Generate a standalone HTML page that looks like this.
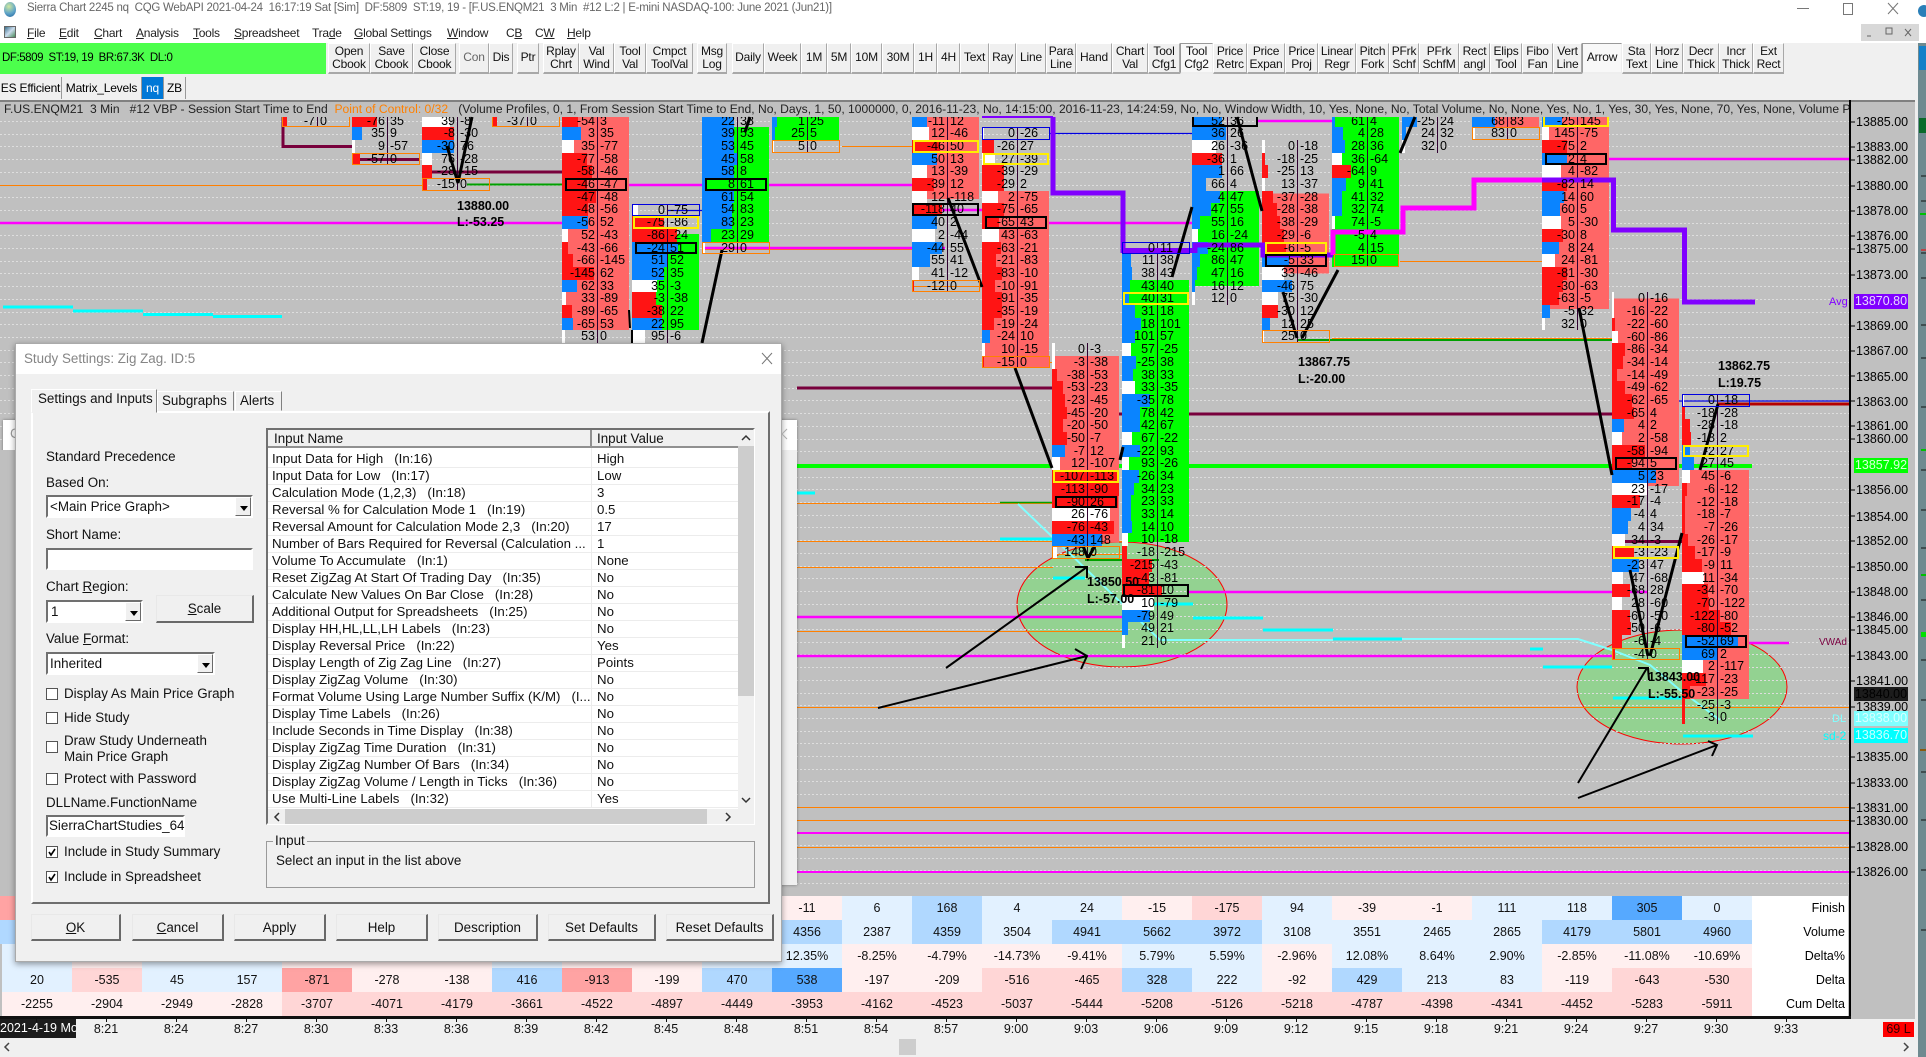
<!DOCTYPE html>
<html><head><meta charset="utf-8"><title>Sierra Chart</title>
<style>
html,body{margin:0;padding:0}
body{width:1926px;height:1057px;overflow:hidden;position:relative;background:#f0f0f0;font-family:"Liberation Sans",sans-serif;color:#000}
svg{position:absolute;left:0;top:0}
.t{position:absolute;white-space:pre;line-height:16px}
.d{font-size:13.4px;color:#111}
.m{position:absolute;top:25px;font-size:12px;line-height:16px;color:#222;letter-spacing:-.25px}
.tb{position:absolute;top:43px;height:31px;font-size:12px;line-height:13.5px;text-align:center;display:flex;align-items:center;justify-content:center;background:#f0f0f0;box-sizing:border-box;border-right:1px solid #a8a8a8;border-bottom:2px solid #a8a8a8;border-top:1px solid #fff;border-left:1px solid #fff;color:#111;letter-spacing:-.2px}
.pr{background:#f8f8f8;border-color:#999 #eee #eee #999}
.tg{position:absolute;top:77px;height:22px;font-size:12px;line-height:22px;text-align:center;background:#f0f0f0;border-right:1px solid #999;box-sizing:border-box;letter-spacing:-.2px}
#w{position:absolute;left:0;top:117px;width:1850px;height:779px;overflow:hidden}
.c{position:absolute;width:70px;font-size:12.5px;line-height:12.7px;color:#000}
.c p{margin:0;height:12.7px;width:67px;position:relative}
.c p::after{content:"";position:absolute;left:35px;top:0;height:12.7px;width:1px;background:#300030}
.c b,.c i,.c a{position:absolute;left:0;top:0;height:12.7px;display:block}
.c b{background:#ff1414}.c i{background:#0a84ff}.c a{background:#fff}
.c s,.c u{position:absolute;top:0;text-decoration:none;white-space:nowrap;z-index:1}
.c s{right:34px}.c u{left:38px}
.c .k{background:#ff6666}.c .g{background:#00ff00}
.c tt{position:absolute;top:0;height:12.7px;box-sizing:border-box;z-index:2}
.x{left:3px;width:62px;border:2px solid #000}
.y{left:1px;width:66px;border:2px solid #ffee00}
.o{left:0;width:68px;border:1px solid #ff8000}
.n{left:0;width:68px;border:1px solid #0000e0}
.zl{position:absolute;font-size:12.5px;font-weight:bold;line-height:14px;white-space:pre}
.pl{position:absolute;left:1856px;font-size:12.5px;line-height:14px;color:#000}
.hl{position:absolute;left:1854px;width:54px;height:15px;font-size:12.5px;line-height:15px;text-align:center}
.row{position:absolute;display:flex;height:24px;font-size:12.5px;line-height:24px;text-align:center;color:#111}
.row span{width:70px;display:block;flex:none}
.lb{background:#e2f1ff}.lr{background:#ffefef}.mr{background:#ffd6d6}.sr{background:#ffa3a3}.mb{background:#b0d8ff}.sb{background:#56a9ff}
.rl{position:absolute;left:1752px;width:93px;height:24px;padding-right:3px;background:#fff;text-align:right;font-size:12.5px;line-height:24px}
.tl{position:absolute;top:1021px;width:70px;text-align:center;font-size:12.5px;line-height:16px;color:#111}
.box{position:absolute;box-sizing:border-box}
.cb{position:absolute;background:#fff;box-sizing:border-box;border:2px solid;border-color:#707070 #fff #fff #707070}
.ab{position:absolute;background:#f0f0f0;box-sizing:border-box;border:1px solid;border-color:#fff #696969 #696969 #fff}
.ab::after{content:"";position:absolute;left:4px;top:8px;border:4px solid transparent;border-top:5px solid #000;border-bottom:0}
.btn{position:absolute;top:914px;height:27px;background:#f0f0f0;box-sizing:border-box;border:1px solid;border-color:#e8e8e8 #696969 #696969 #e8e8e8;border-right-width:2px;border-bottom-width:2px;text-align:center;font-size:13.4px;line-height:25px;color:#111}
#lst{position:absolute;left:268px;top:451px;width:470px;font-size:13.25px;color:#111}
#lst div{height:16px;line-height:16px;border-bottom:1px solid #ececec;position:relative;white-space:pre;padding-left:4px}
#lst span{position:absolute;left:329px;top:0;padding-left:0}
</style></head><body>

<!-- title bar -->
<div style="position:absolute;left:0;top:0;width:1926px;height:24px;background:#fff"></div>
<div style="position:absolute;left:0;top:24px;width:1926px;height:19px;background:#fff"></div>
<div style="position:absolute;left:4px;top:2px;width:12px;height:15px;border-radius:50%;background:radial-gradient(circle at 40% 30%,#cfe8a0,#5fa4c8 55%,#1f5f9a)"></div>
<div class="t" style="left:27px;top:0;font-size:11.5px;letter-spacing:-.25px;color:#666">Sierra Chart 2245 nq  CQG WebAPI 2021-04-24  16:17:19 Sat [Sim]  DF:5809  ST:19, 19 - [F.US.ENQM21  3 Min  #12 L:2 | E-mini NASDAQ-100: June 2021 (Jun21)]</div>
<div style="position:absolute;left:4px;top:26px;width:12px;height:12px;background:linear-gradient(135deg,#3a6f8a,#cde,#4a8a5a);border:1px solid #666;box-sizing:border-box"></div>
<div class="m" style="left:27px"><u>F</u>ile</div><div class="m" style="left:59px"><u>E</u>dit</div><div class="m" style="left:94px"><u>C</u>hart</div><div class="m" style="left:136px"><u>A</u>nalysis</div><div class="m" style="left:193px"><u>T</u>ools</div><div class="m" style="left:234px"><u>S</u>preadsheet</div><div class="m" style="left:312px">Tra<u>d</u>e</div><div class="m" style="left:354px"><u>G</u>lobal Settings</div><div class="m" style="left:447px"><u>W</u>indow</div><div class="m" style="left:506px">C<u>B</u></div><div class="m" style="left:535px">C<u>W</u></div><div class="m" style="left:567px"><u>H</u>elp</div>
<div style="position:absolute;left:1861px;top:24px;width:58px;height:17px;background:#d8d8d8"></div>
<svg width="1926" height="45" style="z-index:1"><path d="M1797 8.500H1809M1888 3L1898 14M1898 3L1888 14" stroke="#777" fill="none"/><rect x="1843.500" y="3.500" width="9" height="11" fill="none" stroke="#777"/><path d="M1867 36H1871M1886 28H1892V34H1886ZM1905 29L1911 36M1911 29L1905 36" stroke="#666" fill="none"/><circle cx="1924" cy="11" r="6" fill="#2a7fb8"/></svg>

<!-- toolbar -->
<div style="position:absolute;left:0;top:43px;width:326px;height:31px;background:#4cff4c;font-size:11.5px;line-height:31px;white-space:pre;padding-left:2px;box-sizing:border-box;letter-spacing:-.44px">DF:5809  ST:19, 19  BR:67.3K  DL:0</div>
<div class="tb" style="left:328px;width:42px">Open<br>Cbook</div><div class="tb" style="left:370px;width:43px">Save<br>Cbook</div><div class="tb" style="left:413px;width:43px">Close<br>Cbook</div>
<div class="tb" style="left:459px;width:30px;color:#666">Con</div><div class="tb" style="left:489px;width:24px">Dis</div><div class="tb" style="left:517px;width:22px">Ptr</div>
<div class="tb" style="left:543px;width:36px">Rplay<br>Chrt</div><div class="tb" style="left:579px;width:35px">Val<br>Wind</div><div class="tb" style="left:614px;width:32px">Tool<br>Val</div><div class="tb" style="left:646px;width:47px">Cmpct<br>ToolVal</div><div class="tb" style="left:697px;width:30px">Msg<br>Log</div>
<div class="tb" style="left:732px;width:32px">Daily</div><div class="tb" style="left:764px;width:37px">Week</div><div class="tb" style="left:801px;width:26px">1M</div><div class="tb" style="left:827px;width:24px">5M</div><div class="tb" style="left:851px;width:31px">10M</div><div class="tb" style="left:882px;width:32px">30M</div><div class="tb" style="left:914px;width:23px">1H</div><div class="tb" style="left:937px;width:23px">4H</div>
<div class="tb" style="left:960px;width:29px">Text</div><div class="tb" style="left:989px;width:27px">Ray</div><div class="tb" style="left:1016px;width:30px">Line</div><div class="tb" style="left:1046px;width:30px">Para<br>Line</div><div class="tb" style="left:1076px;width:36px">Hand</div><div class="tb" style="left:1112px;width:36px">Chart<br>Val</div><div class="tb" style="left:1148px;width:32px">Tool<br>Cfg1</div><div class="tb pr" style="left:1180px;width:33px">Tool<br>Cfg2</div><div class="tb" style="left:1213px;width:34px">Price<br>Retrc</div><div class="tb" style="left:1247px;width:38px">Price<br>Expan</div><div class="tb" style="left:1285px;width:33px">Price<br>Proj</div><div class="tb" style="left:1318px;width:38px">Linear<br>Regr</div><div class="tb" style="left:1356px;width:33px">Pitch<br>Fork</div><div class="tb" style="left:1389px;width:30px">PFrk<br>Schf</div><div class="tb" style="left:1419px;width:40px">PFrk<br>SchfM</div><div class="tb" style="left:1459px;width:31px">Rect<br>angl</div><div class="tb" style="left:1490px;width:32px">Elips<br>Tool</div><div class="tb" style="left:1522px;width:31px">Fibo<br>Fan</div><div class="tb" style="left:1553px;width:29px">Vert<br>Line</div><div class="tb pr" style="left:1582px;width:40px">Arrow</div><div class="tb" style="left:1622px;width:29px">Sta<br>Text</div><div class="tb" style="left:1651px;width:32px">Horz<br>Line</div><div class="tb" style="left:1683px;width:36px">Decr<br>Thick</div><div class="tb" style="left:1719px;width:34px">Incr<br>Thick</div><div class="tb" style="left:1753px;width:31px">Ext<br>Rect</div>

<div class="tg" style="left:0;width:62px">ES Efficient</div><div class="tg" style="left:62px;width:80px">Matrix_Levels</div><div class="tg" style="left:142px;width:22px;background:#0078d7;color:#fff">nq</div><div class="tg" style="left:164px;width:22px">ZB</div>

<!-- chart background -->
<div style="position:absolute;left:0;top:100px;width:1915px;height:919px;background:#c0c0c0"></div>
<div style="position:absolute;left:0;top:100px;width:1915px;height:2px;background:#808080"></div>
<div style="position:absolute;left:0;top:102px;width:1850px;height:15px;overflow:hidden;font-size:12.1px;line-height:15px;white-space:pre;color:#222;padding-left:4px;box-sizing:border-box">F.US.ENQM21  3 Min   #12 VBP - Session Start Time to End  <span style="color:#ff8000">Point of Control: 0/32</span>   (Volume Profiles, 0, 1, From Session Start Time to End, No, Days, 1, 50, 1000000, 0, 2016-11-23, No, 14:15:00, 2016-11-23, 14:24:59, No, No, Window Width, 10, Yes, None, No, Total Volume, No, None, Yes, No, 1, Yes, 30, Yes, None, 70, Yes, None, Volume Profile</div>
<div style="position:absolute;left:1915px;top:100px;width:3px;height:940px;background:#eee"></div>
<div style="position:absolute;left:1918px;top:43px;width:8px;height:1014px;background:#6f8a90"></div>
<svg width="1926" height="1057">
<path d="M1921 60H1926M1921 176H1926M1921 201H1926M1921 253H1926M1921 278H1926M1921 325H1926M1921 358H1926M1921 407H1926M1921 470H1926M1921 510H1926M1921 548H1926M1921 600H1926M1921 660H1926M1921 700H1926M1921 772H1926M1921 820H1926M1921 870H1926M1921 930H1926" stroke="#111"/>
<rect x="1919" y="118" width="7" height="15" fill="#0a6a2a"/><rect x="1919" y="46" width="7" height="24" fill="#1580c8"/><path d="M1920 214H1926M1921 450H1926M1921 575H1926" stroke="#00c000" stroke-width="2"/><rect x="1921" y="632" width="5" height="5" fill="#00e000"/><path d="M1921 250H1926" stroke="#f00"/><path d="M1920 750H1926" stroke="#8a5a10" stroke-width="2"/>
<ellipse cx="1122" cy="604.500" rx="105" ry="62.500" fill="#93d291" stroke="#f00" stroke-width="1"/>
<ellipse cx="1682" cy="687" rx="105" ry="57" fill="#93d291" stroke="#f00" stroke-width="1"/>
<path d="M0 121.500H1850M0 134.500H1850M0 146.500H1850M0 159.500H1850M0 172.500H1850M0 185.500H1850M0 197.500H1850M0 210.500H1850M0 223.500H1850M0 235.500H1850M0 248.500H1850M0 261.500H1850M0 273.500H1850M0 286.500H1850M0 299.500H1850M0 312.500H1850M0 324.500H1850M0 337.500H1850M0 350.500H1850M0 362.500H1850M0 375.500H1850M0 388.500H1850M0 400.500H1850M0 413.500H1850M0 426.500H1850M0 439.500H1850M0 451.500H1850M0 464.500H1850M0 477.500H1850M0 489.500H1850M0 502.500H1850M0 515.500H1850M0 527.500H1850M0 540.500H1850M0 553.500H1850M0 566.500H1850M0 578.500H1850M0 591.500H1850M0 604.500H1850M0 616.500H1850M0 629.500H1850M0 642.500H1850M0 654.500H1850M0 667.500H1850M0 680.500H1850M0 693.500H1850M0 705.500H1850M0 718.500H1850M0 731.500H1850M0 743.500H1850M0 756.500H1850M0 769.500H1850M0 781.500H1850M0 794.500H1850M0 807.500H1850M0 820.500H1850M0 832.500H1850M0 845.500H1850M0 858.500H1850M0 870.500H1850M0 883.500H1850" stroke="#dedede" stroke-dasharray="2 2" fill="none"/>
<path d="M0 185.500H422M842 146.500H912M702 249.500H912M912 286.500H982M1045 362.500H1052M1400 261.500H1542M1332 338.500H1612M797 567.500H1053M797 503.500H1052M797 541.500H1122M1052 554.500H1122M797 631.500H1122M797 707.500H1850M785 807.500H1850M785 820.500H1850M785 847.500H1850" stroke="#ff8000" fill="none"/>
<path d="M0 223H562M629 185H912M912 210H982M1049 223H1192M1258 121H1332M702 248H945M1609 159H1850M1187 592H1648M797 656H1612M797 617H1122M1748 643H1789M1697 465H1720" stroke="#ff00ff" stroke-width="2.500" fill="none"/>
<path d="M785 833H1850M785 872H1850" stroke="#ff00ff" stroke-width="2" fill="none"/>
<path d="M467 184.500H562M1297 340H1612M1085 560H1159" stroke="#00a000" stroke-width="2" fill="none"/>
<path d="M1000 502.500H1052" stroke="#00a000" stroke-width="1.500" fill="none"/>
<path d="M0 466H1752" stroke="#00ff00" stroke-width="4" fill="none"/>
<path d="M283 117V146.500H352M360 159.500H420M432 172H562M797 388H1052M1052 414H1612M1625 541.500H1682" stroke="#78003c" stroke-width="3" fill="none"/>
<path d="M1718 404H1850" stroke="#b40000" stroke-width="3"/>
<path d="M1050 133.500H1192M667 210.500H702M1647 401H1850" stroke="#0000e0" stroke-width="1.200" fill="none"/>
<path d="M3 307H73M73 311H143M143 314.500H213M213 316.500H282M785 493H815M1000 539H1052M1053 578H1085M1122 604H1193M1193 618H1263M1263 630H1333M1333 639H1402M1530 649H1543M1543 667H1612M1613 698H1682M1683 736H1753" stroke="#00ffff" stroke-width="3" fill="none"/>
<path d="M1018 504L1160 640H1333M1402 639H1578L1612 650L1650 665L1680 690L1720 720" stroke="#80ffff" stroke-width="2" fill="none"/>
</svg>

<!-- footprints -->
<div id="w">
<div class="c" style="left:282px;top:-2.35px"><p><b style="width:5px"></b><s>-7</s><u>0</u><tt class="o"></tt></p></div>
<div class="c" style="left:352px;top:-2.35px"><p><b style="width:25px"></b><s>-76</s><u>35</u></p><p><i style="width:10px"></i><s>35</s><u>9</u></p><p><a style="width:3px"></a><s>9</s><u>-57</u></p><p><b style="width:8px"></b><s>-57</s><u>0</u><tt class="o"></tt></p></div>
<div class="c" style="left:422px;top:-2.35px"><p><a style="width:28px"></a><s>39</s><u>-8</u></p><p><b style="width:32px"></b><s>-8</s><u>-30</u></p><p><i style="width:32px"></i><s>-30</s><u>76</u></p><p><a style="width:10px"></a><s>76</s><u>-28</u></p><p><b style="width:10px"></b><s>-28</s><u>-15</u></p><p><b style="width:5px"></b><s>-15</s><u>0</u><tt class="o"></tt></p></div>
<div class="c" style="left:492px;top:-2.35px"><p><b style="width:5px"></b><s>-37</s><u>0</u><tt class="o"></tt></p></div>
<div class="c" style="left:562px;top:-2.35px"><p class="k"><b style="width:16px"></b><s>-54</s><u>3</u></p><p class="k"><i style="width:19px"></i><s>3</s><u>35</u></p><p class="k"><a style="width:12px"></a><s>35</s><u>-77</u></p><p class="k"><b style="width:25px"></b><s>-77</s><u>-58</u></p><p class="k"><b style="width:30px"></b><s>-58</s><u>-46</u></p><p class="k"><b style="width:25px"></b><s>-46</s><u>-47</u><tt class="x"></tt></p><p class="k"><b style="width:34px"></b><s>-47</s><u>-48</u></p><p class="k"><b style="width:26px"></b><s>-48</s><u>-56</u></p><p class="k"><i style="width:26px"></i><s>-56</s><u>52</u></p><p class="k"><a style="width:6px"></a><s>52</s><u>-43</u></p><p class="k"><b style="width:6px"></b><s>-43</s><u>-66</u></p><p class="k"><b style="width:11px"></b><s>-66</s><u>-145</u></p><p class="k"><b style="width:32px"></b><s>-145</s><u>62</u></p><p class="k"><i style="width:15px"></i><s>62</s><u>33</u></p><p class="k"><a style="width:4px"></a><s>33</s><u>-89</u></p><p class="k"><b style="width:10px"></b><s>-89</s><u>-65</u></p><p class="k"><i style="width:11px"></i><s>-65</s><u>53</u></p><p><a style="width:3px"></a><s>53</s><u>0</u></p></div>
<div class="c" style="left:632px;top:86.55px"><p><a style="width:6px"></a><s>0</s><u>-75</u><tt class="n"></tt></p><p><b style="width:32px"></b><s>-75</s><u>-86</u><tt class="y"></tt></p><p style="background:linear-gradient(transparent 40%,#0f0 40%)"><b style="width:45px"></b><s>-86</s><u>-24</u></p><p class="g"><i style="width:46px"></i><s>-24</s><u>51</u><tt class="x"></tt></p><p class="g"><i style="width:35px"></i><s>51</s><u>52</u></p><p class="g"><i style="width:32px"></i><s>52</s><u>35</u></p><p class="g"><a style="width:25px"></a><s>35</s><u>-3</u></p><p class="g"><b style="width:24px"></b><s>-3</s><u>-38</u></p><p class="g"><b style="width:30px"></b><s>-38</s><u>22</u></p><p class="g"><i style="width:30px"></i><s>22</s><u>95</u></p><p><a style="width:13px"></a><s>95</s><u>-6</u></p></div>
<div class="c" style="left:702px;top:-2.35px"><p><i style="width:32px"></i><s>22</s><u>38</u></p><p class="g"><i style="width:32px"></i><s>39</s><u>53</u></p><p class="g"><i style="width:32px"></i><s>53</s><u>45</u></p><p class="g"><i style="width:35px"></i><s>45</s><u>58</u></p><p class="g"><i style="width:32px"></i><s>58</s><u>8</u></p><p class="g"><i style="width:5px"></i><s>8</s><u>61</u><tt class="x"></tt></p><p class="g"><i style="width:32px"></i><s>61</s><u>54</u></p><p class="g"><i style="width:30px"></i><s>54</s><u>83</u></p><p class="g"><i style="width:30px"></i><s>83</s><u>23</u></p><p class="g"><i style="width:9px"></i><s>23</s><u>29</u></p><p><a style="width:3px"></a><s>29</s><u>0</u><tt class="o"></tt></p></div>
<div class="c" style="left:772px;top:-2.35px"><p class="g"><i style="width:5px"></i><s>1</s><u>25</u></p><p class="g"><i style="width:3px"></i><s>25</s><u>5</u></p><p><a style="width:2px"></a><s>5</s><u>0</u><tt class="o"></tt></p></div>
<div class="c" style="left:912px;top:-2.35px"><p class="k"><i style="width:15px"></i><s>-11</s><u>12</u></p><p class="k"><a style="width:17px"></a><s>12</s><u>-46</u></p><p class="k"><b style="width:28px"></b><s>-46</s><u>50</u><tt class="y"></tt></p><p class="k"><i style="width:25px"></i><s>50</s><u>13</u></p><p class="k"><a style="width:15px"></a><s>13</s><u>-39</u></p><p class="k"><b style="width:22px"></b><s>-39</s><u>12</u></p><p style="background:linear-gradient(#f66 65%,transparent 65%)"><a style="width:15px"></a><s>12</s><u>-118</u></p><p><b style="width:30px"></b><s>-118</s><u>40</u><tt class="x" style="left:0;width:67px"></tt></p><p><i style="width:25px"></i><s>40</s><u>2</u></p><p><a style="width:23px"></a><s>2</s><u>-44</u></p><p><i style="width:30px"></i><s>-44</s><u>55</u></p><p><i style="width:18px"></i><s>55</s><u>41</u></p><p><a style="width:7px"></a><s>41</s><u>-12</u></p><p><b style="width:2px"></b><s>-12</s><u>0</u><tt class="o"></tt></p></div>
<div class="c" style="left:982px;top:10.35px"><p><a style="width:2px"></a><s>0</s><u>-26</u><tt class="n"></tt></p><p><b style="width:12px"></b><s>-26</s><u>27</u></p><p><a style="width:13px"></a><s>27</s><u>-39</u><tt class="y"></tt></p><p><b style="width:22px"></b><s>-39</s><u>-29</u></p><p><b style="width:22px"></b><s>-29</s><u>2</u></p><p class="k"><a style="width:16px"></a><s>2</s><u>-75</u></p><p class="k"><b style="width:22px"></b><s>-75</s><u>-65</u></p><p class="k"><b style="width:17px"></b><s>-65</s><u>43</u><tt class="x"></tt></p><p class="k"><a style="width:17px"></a><s>43</s><u>-63</u></p><p class="k"><b style="width:19px"></b><s>-63</s><u>-21</u></p><p class="k"><b style="width:14px"></b><s>-21</s><u>-83</u></p><p class="k"><b style="width:20px"></b><s>-83</s><u>-10</u></p><p class="k"><b style="width:13px"></b><s>-10</s><u>-91</u></p><p class="k"><b style="width:20px"></b><s>-91</s><u>-35</u></p><p class="k"><b style="width:20px"></b><s>-35</s><u>-19</u></p><p class="k"><b style="width:12px"></b><s>-19</s><u>-24</u></p><p class="k"><i style="width:8px"></i><s>-24</s><u>10</u></p><p class="k"><a style="width:3px"></a><s>10</s><u>-15</u></p><p class="k"><b style="width:2px"></b><s>-15</s><u>0</u><tt class="o"></tt></p></div>
<div class="c" style="left:1052px;top:226.25px"><p><a style="width:3px"></a><s>0</s><u>-3</u></p><p class="k"><a style="width:3px"></a><s>-3</s><u>-38</u></p><p class="k"><b style="width:5px"></b><s>-38</s><u>-53</u></p><p class="k"><b style="width:11px"></b><s>-53</s><u>-23</u></p><p class="k"><b style="width:13px"></b><s>-23</s><u>-45</u></p><p class="k"><b style="width:15px"></b><s>-45</s><u>-20</u></p><p class="k"><b style="width:11px"></b><s>-20</s><u>-50</u></p><p class="k"><b style="width:15px"></b><s>-50</s><u>-7</u></p><p class="k"><i style="width:13px"></i><s>-7</s><u>12</u></p><p class="k"><a style="width:8px"></a><s>12</s><u>-107</u></p><p class="k"><b style="width:67px"></b><s>-107</s><u>-113</u><tt class="y"></tt></p><p class="k"><b style="width:67px"></b><s>-113</s><u>-90</u></p><p class="k"><b style="width:66px"></b><s>-90</s><u>26</u><tt class="x"></tt></p><p class="k"><a style="width:58px"></a><s>26</s><u>-76</u></p><p class="k"><b style="width:62px"></b><s>-76</s><u>-43</u></p><p style="background:linear-gradient(#f66 70%,transparent 70%)"><i style="width:50px"></i><s>-43</s><u>148</u></p><p><a style="width:5px"></a><s>148</s><u>0</u><tt class="o"></tt></p></div>
<div class="c" style="left:1122px;top:124.65px"><p><s>0</s><u>11</u><tt class="n"></tt></p><p><i style="width:9px"></i><s>11</s><u>38</u></p><p><i style="width:10px"></i><s>38</s><u>43</u></p><p class="g"><i style="width:8px"></i><s>43</s><u>40</u></p><p class="g"><i style="width:7px"></i><s>40</s><u>31</u><tt class="y"></tt></p><p class="g"><i style="width:13px"></i><s>31</s><u>18</u></p><p class="g"><i style="width:19px"></i><s>18</s><u>101</u></p><p class="g"><i style="width:13px"></i><s>101</s><u>57</u></p><p class="g"><a style="width:9px"></a><s>57</s><u>-25</u></p><p class="g"><i style="width:14px"></i><s>-25</s><u>38</u></p><p class="g"><i style="width:11px"></i><s>38</s><u>33</u></p><p class="g"><a style="width:13px"></a><s>33</s><u>-35</u></p><p class="g"><i style="width:28px"></i><s>-35</s><u>78</u></p><p class="g"><i style="width:18px"></i><s>78</s><u>42</u></p><p class="g"><i style="width:18px"></i><s>42</s><u>67</u></p><p class="g"><a style="width:10px"></a><s>67</s><u>-22</u></p><p class="g"><i style="width:18px"></i><s>-22</s><u>93</u></p><p class="g"><a style="width:7px"></a><s>93</s><u>-26</u></p><p class="g"><i style="width:17px"></i><s>-26</s><u>34</u></p><p class="g"><i style="width:12px"></i><s>34</s><u>23</u></p><p class="g"><i style="width:9px"></i><s>23</s><u>33</u></p><p class="g"><i style="width:9px"></i><s>33</s><u>14</u></p><p class="g"><i style="width:10px"></i><s>14</s><u>10</u></p><p style="background:linear-gradient(#0f0 70%,transparent 70%)"><a style="width:6px"></a><s>10</s><u>-18</u></p><p><b style="width:5px"></b><s>-18</s><u>-215</u></p><p><b style="width:30px"></b><s>-215</s><u>-43</u></p><p><b style="width:27px"></b><s>-43</s><u>-81</u></p><p><b style="width:40px"></b><s>-81</s><u>10</u><tt class="x" style="left:1px;width:66px"></tt></p><p><a style="width:32px"></a><s>10</s><u>-79</u></p><p><i style="width:28px"></i><s>-79</s><u>49</u></p><p><i style="width:6px"></i><s>49</s><u>21</u></p><p><a style="width:3px"></a><s>21</s><u>0</u></p></div>
<div class="c" style="left:1192px;top:-2.35px"><p><i style="width:30px"></i><s>52</s><u>36</u><tt class="x" style="left:0;width:66px"></tt></p><p><i style="width:34px"></i><s>36</s><u>26</u></p><p><a style="width:24px"></a><s>26</s><u>-36</u></p><p><b style="width:30px"></b><s>-36</s><u>1</u></p><p><i style="width:30px"></i><s>1</s><u>66</u></p><p><i style="width:14px"></i><s>66</s><u>4</u></p><p class="g"><i style="width:28px"></i><s>4</s><u>47</u></p><p class="g"><i style="width:19px"></i><s>47</s><u>55</u></p><p class="g"><i style="width:8px"></i><s>55</s><u>16</u></p><p class="g"><a style="width:6px"></a><s>16</s><u>-24</u></p><p class="g"><i style="width:16px"></i><s>-24</s><u>86</u></p><p class="g"><i style="width:8px"></i><s>86</s><u>47</u></p><p class="g"><i style="width:5px"></i><s>47</s><u>16</u></p><p style="background:linear-gradient(#0f0 50%,transparent 50%)"><i style="width:3px"></i><s>16</s><u>12</u></p><p><a style="width:3px"></a><s>12</s><u>0</u></p></div>
<div class="c" style="left:1262px;top:23.05px"><p><a style="width:3px"></a><s>0</s><u>-18</u></p><p><b style="width:3px"></b><s>-18</s><u>-25</u></p><p><b style="width:6px"></b><s>-25</s><u>13</u></p><p><a style="width:3px"></a><s>13</s><u>-37</u></p><p style="background:linear-gradient(transparent 20%,#f66 20%)"><b style="width:11px"></b><s>-37</s><u>-28</u></p><p class="k"><b style="width:15px"></b><s>-28</s><u>-38</u></p><p class="k"><b style="width:18px"></b><s>-38</s><u>-29</u></p><p class="k"><b style="width:22px"></b><s>-29</s><u>-6</u></p><p class="k"><b style="width:24px"></b><s>-6</s><u>-5</u><tt class="y" style="left:3px;width:62px"></tt></p><p class="k"><i style="width:27px"></i><s>-5</s><u>33</u><tt class="x"></tt></p><p style="background:linear-gradient(#f66 50%,transparent 50%)"><a style="width:22px"></a><s>33</s><u>-46</u></p><p><i style="width:30px"></i><s>-46</s><u>75</u></p><p><a style="width:16px"></a><s>75</s><u>-30</u></p><p><b style="width:16px"></b><s>-30</s><u>12</u></p><p><i style="width:8px"></i><s>12</s><u>25</u></p><p><a style="width:2px"></a><s>25</s><u>0</u><tt class="o"></tt></p></div>
<div class="c" style="left:1332px;top:-2.35px"><p class="g"><i style="width:3px"></i><s>61</s><u>4</u></p><p class="g"><i style="width:11px"></i><s>4</s><u>28</u></p><p class="g"><i style="width:13px"></i><s>28</s><u>36</u></p><p class="g"><a style="width:10px"></a><s>36</s><u>-64</u></p><p class="g"><b style="width:19px"></b><s>-64</s><u>9</u></p><p class="g"><i style="width:14px"></i><s>9</s><u>41</u></p><p class="g"><i style="width:10px"></i><s>41</s><u>32</u></p><p class="g"><i style="width:10px"></i><s>32</s><u>74</u></p><p class="g"><a style="width:3px"></a><s>74</s><u>-5</u></p><p class="g"><s>-5</s><u>4</u></p><p class="g"><s>4</s><u>15</u></p><p class="g"><s>15</s><u>0</u><tt class="o" style="left:2px;width:65px"></tt></p></div>
<div class="c" style="left:1402px;top:-2.35px"><p><i style="width:15px"></i><s>-25</s><u>24</u></p><p><i style="width:4px"></i><s>24</s><u>32</u></p><p><a style="width:3px"></a><s>32</s><u>0</u></p></div>
<div class="c" style="left:1472px;top:-2.35px"><p class="k"><i style="width:23px"></i><s>68</s><u>83</u></p><p><a style="width:3px"></a><s>83</s><u>0</u><tt class="o"></tt></p></div>
<div class="c" style="left:1542px;top:-2.35px"><p class="k"><i style="width:20px"></i><s>-25</s><u>145</u><tt class="y" style="top:-6px;height:18px"></tt></p><p class="k"><a style="width:7px"></a><s>145</s><u>-75</u></p><p class="k"><b style="width:25px"></b><s>-75</s><u>2</u></p><p class="k"><i style="width:25px"></i><s>2</s><u>4</u><tt class="x"></tt></p><p class="k"><a style="width:19px"></a><s>4</s><u>-82</u></p><p class="k"><b style="width:25px"></b><s>-82</s><u>14</u></p><p class="k"><i style="width:22px"></i><s>14</s><u>60</u></p><p class="k"><i style="width:18px"></i><s>60</s><u>5</u></p><p class="k"><a style="width:19px"></a><s>5</s><u>-30</u></p><p class="k"><b style="width:21px"></b><s>-30</s><u>8</u></p><p class="k"><i style="width:17px"></i><s>8</s><u>24</u></p><p class="k"><a style="width:13px"></a><s>24</s><u>-81</u></p><p class="k"><b style="width:25px"></b><s>-81</s><u>-30</u></p><p class="k"><b style="width:21px"></b><s>-30</s><u>-63</u></p><p class="k"><b style="width:17px"></b><s>-63</s><u>-5</u></p><p style="background:linear-gradient(#f66 30%,transparent 30%)"><i style="width:8px"></i><s>-5</s><u>32</u></p><p><a style="width:3px"></a><s>32</s><u>0</u></p></div>
<div class="c" style="left:1612px;top:175.45px"><p style="background:linear-gradient(transparent 50%,#f66 50%)"><a style="width:2px"></a><s>0</s><u>-16</u></p><p class="k"><a style="width:2px"></a><s>-16</s><u>-22</u></p><p class="k"><b style="width:3px"></b><s>-22</s><u>-60</u></p><p class="k"><a style="width:6px"></a><s>-60</s><u>-86</u></p><p class="k"><b style="width:13px"></b><s>-86</s><u>-34</u></p><p class="k"><b style="width:11px"></b><s>-34</s><u>-14</u></p><p class="k"><b style="width:5px"></b><s>-14</s><u>-49</u></p><p class="k"><b style="width:13px"></b><s>-49</s><u>-62</u></p><p class="k"><b style="width:20px"></b><s>-62</s><u>-65</u></p><p class="k"><b style="width:22px"></b><s>-65</s><u>4</u></p><p class="k"><i style="width:12px"></i><s>4</s><u>2</u></p><p class="k"><a style="width:10px"></a><s>2</s><u>-58</u></p><p class="k"><b style="width:33px"></b><s>-58</s><u>-94</u></p><p class="k"><b style="width:20px"></b><s>-94</s><u>5</u><tt class="x"></tt></p><p class="k"><i style="width:44px"></i><s>5</s><u>23</u></p><p style="background:linear-gradient(#f66 25%,transparent 25%)"><a style="width:36px"></a><s>23</s><u>-17</u></p><p><b style="width:28px"></b><s>-17</s><u>-4</u></p><p><i style="width:19px"></i><s>-4</s><u>4</u></p><p><i style="width:16px"></i><s>4</s><u>34</u></p><p><a style="width:13px"></a><s>34</s><u>-3</u></p><p><b style="width:22px"></b><s>-3</s><u>-23</u><tt class="y"></tt></p><p><i style="width:27px"></i><s>-23</s><u>47</u></p><p><a style="width:11px"></a><s>47</s><u>-68</u></p><p><b style="width:18px"></b><s>-68</s><u>28</u></p><p><a style="width:10px"></a><s>28</s><u>-60</u></p><p><b style="width:18px"></b><s>-60</s><u>-50</u></p><p><b style="width:19px"></b><s>-50</s><u>-6</u></p><p><b style="width:10px"></b><s>-6</s><u>-4</u></p><p><b style="width:3px"></b><s>-4</s><u>0</u><tt class="o"></tt></p></div>
<div class="c" style="left:1682px;top:277.05px"><p><a style="width:2px"></a><s>0</s><u>-18</u><tt class="n"></tt></p><p><b style="width:3px"></b><s>-18</s><u>-28</u></p><p><b style="width:8px"></b><s>-28</s><u>-18</u></p><p><b style="width:9px"></b><s>-18</s><u>2</u></p><p><i style="width:8px"></i><s>-2</s><u>27</u><tt class="y"></tt></p><p><i style="width:12px"></i><s>27</s><u>45</u></p><p class="k"><a style="width:8px"></a><s>45</s><u>-6</u></p><p class="k"><b style="width:5px"></b><s>-6</s><u>-12</u></p><p class="k"><b style="width:3px"></b><s>-12</s><u>-18</u></p><p class="k"><b style="width:3px"></b><s>-18</s><u>-7</u></p><p class="k"><b style="width:3px"></b><s>-7</s><u>-26</u></p><p class="k"><b style="width:6px"></b><s>-26</s><u>-17</u></p><p class="k"><b style="width:13px"></b><s>-17</s><u>-9</u></p><p class="k"><b style="width:20px"></b><s>-9</s><u>11</u></p><p class="k"><a style="width:22px"></a><s>11</s><u>-34</u></p><p class="k"><b style="width:26px"></b><s>-34</s><u>-70</u></p><p class="k"><b style="width:27px"></b><s>-70</s><u>-122</u></p><p class="k"><b style="width:38px"></b><s>-122</s><u>-80</u></p><p class="k"><b style="width:49px"></b><s>-80</s><u>-52</u></p><p class="k"><i style="width:56px"></i><s>-52</s><u>69</u><tt class="x"></tt></p><p class="k"><i style="width:35px"></i><s>69</s><u>2</u></p><p class="k"><a style="width:21px"></a><s>2</s><u>-117</u></p><p class="k"><b style="width:24px"></b><s>-117</s><u>-23</u></p><p class="k"><b style="width:8px"></b><s>-23</s><u>-25</u></p><p><b style="width:3px"></b><s>-25</s><u>-3</u></p><p><b style="width:3px"></b><s>-3</s><u>0</u></p></div>
</div>

<!-- overlay lines -->
<svg width="1926" height="1057">
<path d="M982 117H1053" stroke="#8000ff" stroke-width="2" fill="none"/>
<path d="M1053 117V193H1123V250.500H1195V245H1263V255H1333" stroke="#8000ff" stroke-width="5" fill="none"/>
<path d="M1333 255V232H1403V208H1474V180H1542" stroke="#ff00ff" stroke-width="5" fill="none"/>
<path d="M1542 180H1613.500V230H1684.500V302H1755" stroke="#8000ff" stroke-width="5" fill="none"/>
<path d="M447 146L458 183L472 117M702 343L722 250M745 132L750 117M948 198L982 287M1015 368L1052 468M1083 546L1088 558L1095 546M1120 460L1123 447M1172 277L1192 207M1237 117L1262 211M1283 292L1297 338M1302 338L1338 270M1400 153L1415 117M1579 308L1612 475M1630 570L1648 656M1650 656L1682 533M1700 470L1718 404" stroke="#000" stroke-width="3" fill="none"/>
<path d="M629 310L630 328M632 330V343" stroke="#000" stroke-width="2" fill="none"/>
<path d="M946 668L1087 567M1075 567H1087V578M878 708L1087 656M1075 649L1087 656L1081 669M1578 783L1647 668M1638 668H1648L1649 680M1578 798L1717 745M1708 741L1717 745L1712 756" stroke="#000" stroke-width="2" fill="none"/>
<path d="M1850 100V1019" stroke="#000" stroke-width="2"/>
<path d="M1851 122H1855M1851 147H1855M1851 160H1855M1851 186H1855M1851 211H1855M1851 236H1855M1851 249H1855M1851 275H1855M1851 326H1855M1851 351H1855M1851 376H1855M1851 401H1855M1851 426H1855M1851 439H1855M1851 490H1855M1851 516H1855M1851 541H1855M1851 567H1855M1851 592H1855M1851 617H1855M1851 630H1855M1851 656H1855M1851 681H1855M1851 707H1855M1851 757H1855M1851 783H1855M1851 808H1855M1851 821H1855M1851 847H1855M1851 872H1855" stroke="#000" fill="none"/>
</svg>
<div class="zl" style="left:457px;top:199px">13880.00</div><div class="zl" style="left:457px;top:215px">L:-53.25</div>
<div class="zl" style="left:1298px;top:355px">13867.75</div><div class="zl" style="left:1298px;top:372px">L:-20.00</div>
<div class="zl" style="left:1087px;top:575px">13850.50</div><div class="zl" style="left:1087px;top:592px">L:-57.00</div>
<div class="zl" style="left:1718px;top:359px">13862.75</div><div class="zl" style="left:1718px;top:376px">L:19.75</div>
<div class="zl" style="left:1648px;top:670px">13843.00</div><div class="zl" style="left:1648px;top:687px">L:-55.50</div>

<!-- price scale -->
<div class="pl" style="top:115px">13885.00</div><div class="pl" style="top:140px">13883.00</div><div class="pl" style="top:153px">13882.00</div><div class="pl" style="top:179px">13880.00</div><div class="pl" style="top:204px">13878.00</div><div class="pl" style="top:229px">13876.00</div><div class="pl" style="top:242px">13875.00</div><div class="pl" style="top:268px">13873.00</div><div class="pl" style="top:319px">13869.00</div><div class="pl" style="top:344px">13867.00</div><div class="pl" style="top:370px">13865.00</div><div class="pl" style="top:395px">13863.00</div><div class="pl" style="top:419px">13861.00</div><div class="pl" style="top:432px">13860.00</div><div class="pl" style="top:483px">13856.00</div><div class="pl" style="top:510px">13854.00</div><div class="pl" style="top:534px">13852.00</div><div class="pl" style="top:560px">13850.00</div><div class="pl" style="top:585px">13848.00</div><div class="pl" style="top:610px">13846.00</div><div class="pl" style="top:623px">13845.00</div><div class="pl" style="top:649px">13843.00</div><div class="pl" style="top:674px">13841.00</div><div class="pl" style="top:700px">13839.00</div><div class="pl" style="top:750px">13835.00</div><div class="pl" style="top:776px">13833.00</div><div class="pl" style="top:801px">13831.00</div><div class="pl" style="top:814px">13830.00</div><div class="pl" style="top:840px">13828.00</div><div class="pl" style="top:865px">13826.00</div>
<div class="hl" style="top:294px;background:#8000ff;color:#e8d8ff">13870.80</div>
<div class="hl" style="top:458px;background:#00ff00;color:#d8ffd8">13857.92</div>
<div class="hl" style="top:687px;height:14px;line-height:14px;background:#1c1c1c;color:#000">13840.00</div>
<div class="hl" style="top:711px;background:#80ffff;color:#d8ffff">13838.00</div>
<div class="hl" style="top:728px;background:#00ffff;color:#c8ffff">13836.70</div>
<div class="t" style="left:1829px;top:294px;font-size:11px;color:#8000ff">Avg</div>
<div class="t" style="left:1819px;top:635px;font-size:10px;color:#7a0040">VWAd</div>
<div class="t" style="left:1832px;top:711px;font-size:11px;color:#80ffff">DL</div>
<div class="t" style="left:1823px;top:728px;font-size:12px;color:#00ffff">sd-2</div>

<!-- table -->
<div class="row" style="left:0;top:896px;width:772px;background:#ffa3a3"></div>
<div class="row" style="left:0;top:920px;width:772px;background:#b0d8ff"></div>
<div class="row" style="left:2px;top:944px"><span class="lb"></span><span class="lr"></span><span class="lb"></span><span class="lb"></span><span class="lr"></span><span class="lr"></span><span class="lr"></span><span class="lb"></span><span class="lr"></span><span class="lr"></span><span class="lb"></span></div>
<div class="row" style="left:772px;top:896px"><span class="lr">-11</span><span class="lb">6</span><span class="mb">168</span><span class="lb">4</span><span class="lb">24</span><span class="lr">-15</span><span class="mr">-175</span><span class="lb">94</span><span class="lr">-39</span><span class="lr">-1</span><span class="lb">111</span><span class="lb">118</span><span class="sb">305</span><span class="lb">0</span></div>
<div class="row" style="left:772px;top:920px"><span class="mb">4356</span><span class="lb">2387</span><span class="mb">4359</span><span class="lb">3504</span><span class="mb">4941</span><span class="mb">5662</span><span class="mb">3972</span><span class="lb">3108</span><span class="lb">3551</span><span class="lb">2465</span><span class="lb">2865</span><span class="mb">4179</span><span class="mb">5801</span><span class="mb">4960</span></div>
<div class="row" style="left:772px;top:944px"><span class="lb">12.35%</span><span class="lr">-8.25%</span><span class="lr">-4.79%</span><span class="lr">-14.73%</span><span class="lr">-9.41%</span><span class="lb">5.79%</span><span class="lb">5.59%</span><span class="lr">-2.96%</span><span class="lb">12.08%</span><span class="lb">8.64%</span><span class="lb">2.90%</span><span class="lr">-2.85%</span><span class="lr">-11.08%</span><span class="lr">-10.69%</span></div>
<div class="row" style="left:2px;top:968px"><span class="lb">20</span><span class="mr">-535</span><span class="lb">45</span><span class="lb">157</span><span class="sr">-871</span><span class="lr">-278</span><span class="lr">-138</span><span class="mb">416</span><span class="sr">-913</span><span class="lr">-199</span><span class="mb">470</span><span class="sb">538</span><span class="lr">-197</span><span class="lr">-209</span><span class="mr">-516</span><span class="mr">-465</span><span class="mb">328</span><span class="lb">222</span><span class="lr">-92</span><span class="mb">429</span><span class="lb">213</span><span class="lb">83</span><span class="lr">-119</span><span class="mr">-643</span><span class="mr">-530</span></div>
<div class="row" style="left:2px;top:992px"><span class="lr">-2255</span><span class="lr">-2904</span><span class="lr">-2949</span><span class="lr">-2828</span><span class="mr">-3707</span><span class="mr">-4071</span><span class="mr">-4179</span><span class="mr">-3661</span><span class="mr">-4522</span><span class="mr">-4897</span><span class="mr">-4449</span><span class="mr">-3953</span><span class="mr">-4162</span><span class="mr">-4523</span><span class="mr">-5037</span><span class="mr">-5444</span><span class="mr">-5208</span><span class="mr">-5126</span><span class="mr">-5218</span><span class="mr">-4787</span><span class="mr">-4398</span><span class="mr">-4341</span><span class="mr">-4452</span><span class="mr">-5283</span><span class="mr">-5911</span></div>
<div class="rl" style="top:896px">Finish</div><div class="rl" style="top:920px">Volume</div><div class="rl" style="top:944px">Delta%</div><div class="rl" style="top:968px">Delta</div><div class="rl" style="top:992px">Cum Delta</div>
<div style="position:absolute;left:0;top:1016px;width:1851px;height:3px;background:#111"></div>
<div style="position:absolute;left:0;top:1019px;width:76px;height:19px;background:#1c1c1c;color:#fff;font-size:12.5px;line-height:19px;white-space:pre;overflow:hidden">2021-4-19 Mo</div>
<div class="tl" style="left:71px">8:21</div><div class="tl" style="left:141px">8:24</div><div class="tl" style="left:211px">8:27</div><div class="tl" style="left:281px">8:30</div><div class="tl" style="left:351px">8:33</div><div class="tl" style="left:421px">8:36</div><div class="tl" style="left:491px">8:39</div><div class="tl" style="left:561px">8:42</div><div class="tl" style="left:631px">8:45</div><div class="tl" style="left:701px">8:48</div><div class="tl" style="left:771px">8:51</div><div class="tl" style="left:841px">8:54</div><div class="tl" style="left:911px">8:57</div><div class="tl" style="left:981px">9:00</div><div class="tl" style="left:1051px">9:03</div><div class="tl" style="left:1121px">9:06</div><div class="tl" style="left:1191px">9:09</div><div class="tl" style="left:1261px">9:12</div><div class="tl" style="left:1331px">9:15</div><div class="tl" style="left:1401px">9:18</div><div class="tl" style="left:1471px">9:21</div><div class="tl" style="left:1541px">9:24</div><div class="tl" style="left:1611px">9:27</div><div class="tl" style="left:1681px">9:30</div><div class="tl" style="left:1751px">9:33</div>
<svg width="1926" height="1057"><path d="M36.500 1019V1022M106.500 1019V1022M176.500 1019V1022M246.500 1019V1022M316.500 1019V1022M386.500 1019V1022M456.500 1019V1022M526.500 1019V1022M596.500 1019V1022M666.500 1019V1022M736.500 1019V1022M806.500 1019V1022M876.500 1019V1022M946.500 1019V1022M1016.500 1019V1022M1086.500 1019V1022M1156.500 1019V1022M1226.500 1019V1022M1296.500 1019V1022M1366.500 1019V1022M1436.500 1019V1022M1506.500 1019V1022M1576.500 1019V1022M1646.500 1019V1022M1716.500 1019V1022M1786.500 1019V1022" stroke="#111"/></svg>
<div style="position:absolute;left:1883px;top:1022px;width:31px;height:15px;background:#f00;font-size:12.5px;line-height:15px;text-align:center;color:#300">69 L</div>
<div style="position:absolute;left:0;top:1038px;width:1918px;height:19px;background:#f0f0f0"></div>
<div style="position:absolute;left:899px;top:1039px;width:17px;height:16px;background:#cdcdcd"></div>
<svg width="1926" height="1057"><path d="M9 1043L5 1047L9 1051M1904 1043L1908 1047L1904 1051" stroke="#444" stroke-width="1.500" fill="none"/></svg>

<!-- rear window -->
<div class="box" style="left:3px;top:420px;width:794px;height:465px;background:#f0f0f0;box-shadow:0 0 3px rgba(0,0,0,.4)"></div>
<div class="box" style="left:3px;top:420px;width:794px;height:30px;background:#fff"></div>
<div class="box" style="left:0;top:450px;width:16px;height:446px;background:#bfbfbf"></div>
<div class="t d" style="left:10px;top:426px;color:#999">C</div>

<!-- dialog -->
<div class="box" style="left:15px;top:343px;width:767px;height:619px;background:#f0f0f0;border:1px solid #aaa;box-shadow:0 2px 6px rgba(0,0,0,.4)"></div>
<div class="box" style="left:16px;top:344px;width:765px;height:30px;background:#fff"></div>
<div class="t d" style="left:24px;top:351px;color:#858585">Study Settings: Zig Zag. ID:5</div>
<div class="box" style="left:31px;top:411px;width:739px;height:493px;border:2px solid;border-color:#fff #6e6e6e #6e6e6e #fff"></div>
<div class="box" style="left:31px;top:389px;width:126px;height:24px;background:#f0f0f0;border:1px solid;border-color:#fff #808080 #f0f0f0 #fff;z-index:0"></div>
<div class="box" style="left:157px;top:391px;width:77px;height:20px;border:1px solid;border-color:#fff #808080 transparent #fff"></div>
<div class="box" style="left:235px;top:391px;width:47px;height:20px;border:1px solid;border-color:#fff #808080 transparent #fff"></div>
<div class="t d" style="left:38px;top:391px">Settings and Inputs</div><div class="t d" style="left:162px;top:393px">Subgraphs</div><div class="t d" style="left:240px;top:393px">Alerts</div>

<div class="t d" style="left:46px;top:449px">Standard Precedence</div>
<div class="t d" style="left:46px;top:475px">Based On:</div>
<div class="cb" style="left:46px;top:495px;width:207px;height:23px"></div><div class="t d" style="left:50px;top:499px">&lt;Main Price Graph&gt;</div><div class="ab" style="left:235px;top:497px;width:16px;height:19px"></div>
<div class="t d" style="left:46px;top:527px">Short Name:</div>
<div class="cb" style="left:46px;top:548px;width:207px;height:22px"></div>
<div class="t d" style="left:46px;top:579px">Chart <u>R</u>egion:</div>
<div class="cb" style="left:46px;top:600px;width:97px;height:23px"></div><div class="t d" style="left:51px;top:604px">1</div><div class="ab" style="left:125px;top:602px;width:16px;height:19px"></div>
<div class="btn" style="left:156px;top:595px;width:98px;height:28px;line-height:26px"><u>S</u>cale</div>
<div class="t d" style="left:46px;top:631px">Value <u>F</u>ormat:</div>
<div class="cb" style="left:46px;top:652px;width:169px;height:23px"></div><div class="t d" style="left:50px;top:656px">Inherited</div><div class="ab" style="left:197px;top:654px;width:16px;height:19px"></div>
<div class="t d" style="left:64px;top:686px">Display As Main Price Graph</div>
<div class="t d" style="left:64px;top:710px">Hide Study</div>
<div class="t d" style="left:64px;top:733px">Draw Study Underneath</div><div class="t d" style="left:64px;top:749px">Main Price Graph</div>
<div class="t d" style="left:64px;top:771px">Protect with Password</div>
<div class="t d" style="left:46px;top:795px">DLLName.FunctionName</div>
<div class="cb" style="left:46px;top:815px;width:139px;height:22px"></div><div class="t d" style="left:49px;top:818px">SierraChartStudies_64</div>
<div class="t d" style="left:64px;top:844px">Include in Study Summary</div>
<div class="t d" style="left:64px;top:869px">Include in Spreadsheet</div>

<!-- list -->
<div class="box" style="left:266px;top:428px;width:489px;height:397px;background:#fff;border:2px solid;border-color:#707070 #fff #fff #707070"></div>
<div class="box" style="left:268px;top:430px;width:470px;height:18px;background:#f0f0f0;border-bottom:2px solid #909090"></div>
<div class="box" style="left:590px;top:430px;width:2px;height:18px;background:#909090"></div>
<div class="box" style="left:591px;top:448px;width:1px;height:360px;background:#ececec"></div>
<div class="t d" style="left:274px;top:431px">Input Name</div><div class="t d" style="left:597px;top:431px">Input Value</div>
<div id="lst">
<div>Input Data for High   (In:16)<span>High</span></div>
<div>Input Data for Low   (In:17)<span>Low</span></div>
<div>Calculation Mode (1,2,3)   (In:18)<span>3</span></div>
<div>Reversal % for Calculation Mode 1   (In:19)<span>0.5</span></div>
<div>Reversal Amount for Calculation Mode 2,3   (In:20)<span>17</span></div>
<div>Number of Bars Required for Reversal (Calculation ...<span>1</span></div>
<div>Volume To Accumulate   (In:1)<span>None</span></div>
<div>Reset ZigZag At Start Of Trading Day   (In:35)<span>No</span></div>
<div>Calculate New Values On Bar Close   (In:28)<span>No</span></div>
<div>Additional Output for Spreadsheets   (In:25)<span>No</span></div>
<div>Display HH,HL,LL,LH Labels   (In:23)<span>No</span></div>
<div>Display Reversal Price   (In:22)<span>Yes</span></div>
<div>Display Length of Zig Zag Line   (In:27)<span>Points</span></div>
<div>Display ZigZag Volume   (In:30)<span>No</span></div>
<div>Format Volume Using Large Number Suffix (K/M)   (I...<span>No</span></div>
<div>Display Time Labels   (In:26)<span>No</span></div>
<div>Include Seconds in Time Display   (In:38)<span>No</span></div>
<div>Display ZigZag Time Duration   (In:31)<span>No</span></div>
<div>Display ZigZag Number Of Bars   (In:34)<span>No</span></div>
<div>Display ZigZag Volume / Length in Ticks   (In:36)<span>No</span></div>
<div>Use Multi-Line Labels   (In:32)<span>Yes</span></div>
</div>
<div class="box" style="left:738px;top:430px;width:16px;height:379px;background:#f0f0f0"></div>
<div class="box" style="left:738px;top:446px;width:16px;height:250px;background:#cdcdcd"></div>
<div class="box" style="left:268px;top:809px;width:486px;height:15px;background:#f0f0f0"></div>
<div class="box" style="left:285px;top:809px;width:422px;height:15px;background:#cdcdcd"></div>
<div class="box" style="left:266px;top:841px;width:489px;height:47px;border:1px solid #9a9a9a"></div>
<div class="box" style="left:273px;top:834px;width:34px;height:14px;background:#f0f0f0"></div>
<div class="t d" style="left:275px;top:833px">Input</div>
<div class="t d" style="left:276px;top:853px">Select an input in the list above</div>

<div class="btn" style="left:31px;width:90px"><u>O</u>K</div><div class="btn" style="left:132px;width:92px"><u>C</u>ancel</div><div class="btn" style="left:234px;width:92px">Apply</div><div class="btn" style="left:336px;width:92px">Help</div><div class="btn" style="left:438px;width:100px">Description</div><div class="btn" style="left:548px;width:108px">Set Defaults</div><div class="btn" style="left:666px;width:108px">Reset Defaults</div>

<svg width="1926" height="1057">
<path d="M762 353L772 364M772 353L762 364" stroke="#777" fill="none"/>
<path d="M787 429L782 434L787 439" stroke="#aaa" fill="none"/>
<path d="M742 440L746 436L750 440M742 798L746 802L750 798M279 813L275 817L279 821M726 813L730 817L726 821" stroke="#333" stroke-width="1.500" fill="none"/>
<g fill="#fff" stroke="#555"><rect x="46.500" y="688.500" width="11" height="11"/><rect x="46.500" y="712.500" width="11" height="11"/><rect x="46.500" y="741.500" width="11" height="11"/><rect x="46.500" y="773.500" width="11" height="11"/><rect x="46.500" y="846.500" width="11" height="11"/><rect x="46.500" y="871.500" width="11" height="11"/></g>
<path d="M49 852L51 855L55 849M49 877L51 880L55 874" stroke="#000" stroke-width="1.600" fill="none"/>
</svg>
</body></html>
